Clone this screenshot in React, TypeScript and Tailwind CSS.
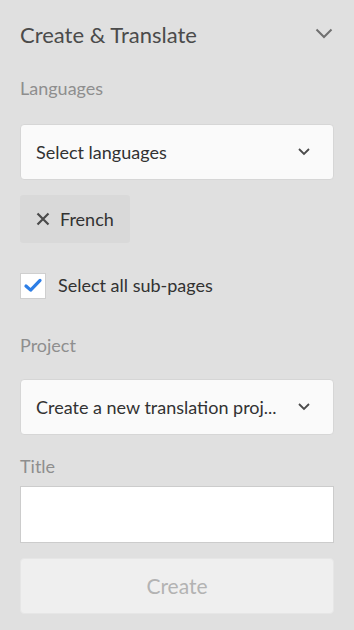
import React, { useState } from 'react';

const Chevron: React.FC<{ className?: string }> = ({ className }) => (
  <svg viewBox="0 0 18 12" className={className} fill="none" stroke="currentColor" strokeWidth={2}>
    <path d="M1.5 1.5 L9 9 L16.5 1.5" />
  </svg>
);

const SmallChevron: React.FC = () => (
  <svg viewBox="0 0 12 8" className="w-[12px] h-[8px] text-[#4b4b4b]" fill="none" stroke="currentColor" strokeWidth={1.8}>
    <path d="M1 1 L6 6 L11 1" />
  </svg>
);

const Dropdown: React.FC<{ label: string }> = ({ label }) => (
  <button className="w-full h-[56px] flex items-center justify-between pl-[15px] pr-[23px] bg-[#fafafa] border border-[#d6d6d6] rounded-[4px] text-[18px] text-[#323232]">
    <span>{label}</span>
    <SmallChevron />
  </button>
);

export default function App() {
  const [checked, setChecked] = useState(true);

  return (
    <div
      className="w-[354px] h-[630px] bg-[#e0e0e0] px-[20px] pt-[17px] overflow-hidden"
      style={{ fontFamily: 'Lato, "Open Sans", sans-serif' }}
    >
      <div className="flex items-center justify-between h-[34px]">
        <h1 className="text-[22px] text-[#4b4b4b]">Create &amp; Translate</h1>
        <Chevron className="w-[18px] h-[12px] text-[#707070] mr-[1px]" />
      </div>

      <div className="mt-[26px] text-[18px] leading-[22px] text-[#8e8e8e]">Languages</div>

      <div className="mt-[25px]">
        <Dropdown label="Select languages" />
      </div>

      <div className="mt-[15px] inline-flex items-center gap-[10px] h-[48px] w-[110px] pl-[16px] bg-[#d9d9d9] rounded-[3px] text-[18px] text-[#323232]">
        <svg viewBox="0 0 14 14" className="w-[14px] h-[14px] text-[#4b4b4b]" fill="none" stroke="currentColor" strokeWidth={2.2}>
          <path d="M1.5 1.5 L12.5 12.5 M12.5 1.5 L1.5 12.5" />
        </svg>
        <span>French</span>
      </div>

      <label className="mt-[29px] flex items-center gap-[12px] cursor-pointer" onClick={() => setChecked(!checked)}>
        <span className="w-[26px] h-[26px] bg-white border border-[#cfcfcf] flex items-center justify-center">
          {checked && (
            <svg viewBox="0 0 20 16" className="w-[20px] h-[15px]" fill="none" stroke="#2d7ee6" strokeWidth={3.4} strokeLinecap="round" strokeLinejoin="round">
              <path d="M2.5 8.5 L7.5 13 L17.5 2.5" />
            </svg>
          )}
        </span>
        <span className="text-[18px] text-[#323232]">Select all sub-pages</span>
      </label>

      <div className="mt-[35px] text-[18px] leading-[22px] text-[#8e8e8e]">Project</div>

      <div className="mt-[23px]">
        <Dropdown label="Create a new translation proj..." />
      </div>

      <div className="mt-[20px] text-[18px] leading-[22px] text-[#8e8e8e]">Title</div>

      <input className="block mt-[9px] w-full h-[57px] bg-white border border-[#cccccc] outline-none px-3" />

      <button
        disabled
        className="block mt-[15px] w-full h-[56px] bg-[#efefef] rounded-[4px] text-[21px] text-[#b3b3b3] border border-[#e6e6e6]"
      >
        Create
      </button>
    </div>
  );
}
